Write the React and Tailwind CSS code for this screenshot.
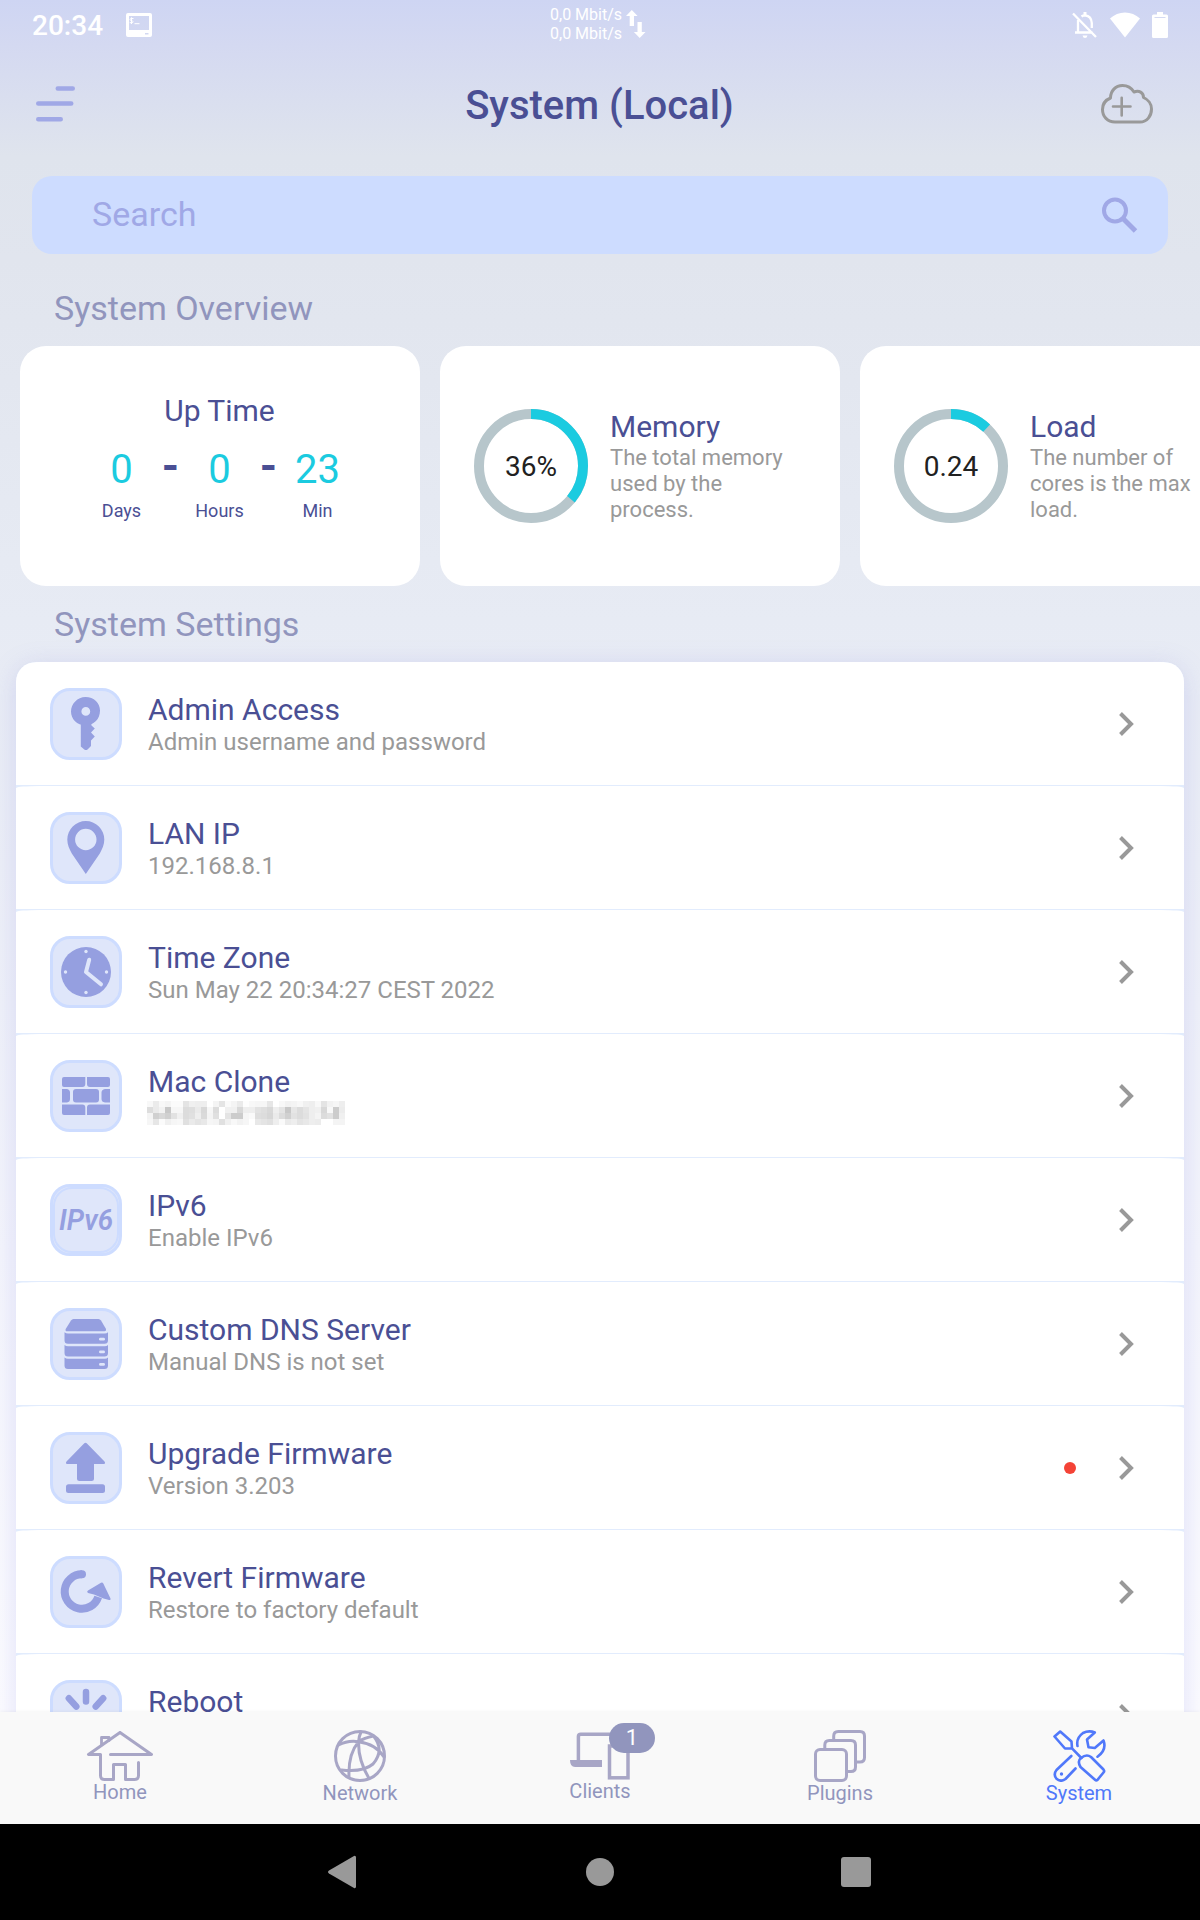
import React from "react";

const INK = "#959fe0";
const PALE = "#dfe6fa";

function StatusBar() {
  return (
    <div className="relative flex h-12 shrink-0 items-center justify-between px-8 pt-0.5 text-white">
      <div className="flex items-center gap-[23px]">
        <span className="pt-0.5 text-[28px] leading-[44px] font-medium">20:34</span>
        <svg width="26" height="24" viewBox="0 0 26 24">
          <path fillRule="evenodd" fill="#fff" d="M2 0H24q2 0 2 2V22q0 2-2 2H2q-2 0-2-2V2Q0 0 2 0ZM3 3V17H23V3ZM19 20v1.5h3.500V20Z" />
          <path d="M7.500 5.500H5.300Q4 5.500 4 6.500T5.300 7.500T7 8.600T5.500 9.700H3.700M5.500 4.300V11M8.500 10.700H13.500" stroke="#fff" strokeWidth="1" fill="none" />
        </svg>
      </div>
      <div className="absolute top-[5px] left-[550px] flex gap-1">
        <div className="text-base leading-[19px]">
          <div>0,0 Mbit/s</div>
          <div>0,0 Mbit/s</div>
        </div>
        <svg className="mt-[5px]" width="20" height="28" viewBox="0 0 20 28" fill="#fff">
          <path d="M5.800 0L11.600 6H8V16H3.700V6H0ZM13.700 28L19.500 22H15.800V12H11.500V22H7.900Z" />
        </svg>
      </div>
      <div className="flex items-center gap-3">
        <svg width="26" height="28" viewBox="0 0 26 28" fill="none" stroke="#fff" strokeWidth="2.300">
          <path d="M6 9V20.500M3 21.500H20.500M9.500 5.500Q11 4.300 13 4.300Q19.500 5 19.800 12V17M1 2.500L24 26" />
          <path d="M13 1v3" strokeWidth="3" />
          <path d="M10.500 24.500h5q-.6 2.600-2.500 2.600t-2.500-2.600Z" fill="#fff" stroke="none" />
        </svg>
        <svg width="30" height="26" viewBox="0 0 30 26">
          <path d="M0 6.500Q6.500.5 15 .5T30 6.500L15 25.500Z" fill="#fff" />
        </svg>
        <svg width="16" height="26" viewBox="0 0 16 26">
          <path d="M5 0H11V2.500H14.500Q16 2.500 16 4V24.500Q16 26 14.500 26H1.500Q0 26 0 24.500V4Q0 2.500 1.500 2.500H5Z" fill="#fff" />
          <path d="M2.500 5.500H13.500" stroke="#d4daf3" />
        </svg>
      </div>
    </div>
  );
}

function Header() {
  return (
    <header className="flex h-28 shrink-0 items-center justify-between pr-[47px] pl-9">
      <svg width="52" height="36" viewBox="0 0 52 36" stroke="#a0a8e6" strokeWidth="4.600" strokeLinecap="round">
        <path d="M21.800 2.500H36.700M2.300 17.500H35.200M2.300 33.200H24.700" />
      </svg>
      <h1 className="pt-[3px] pl-[10px] text-[40px] leading-[48px] font-medium text-[#4a4f94]">System (Local)</h1>
      <svg width="52" height="40" viewBox="0 0 52 40" fill="none" stroke="#999" strokeWidth="3" strokeLinejoin="round" strokeLinecap="round">
        <path d="M14 38H39C46 38 50.500 32 50.500 25C50.500 20 47 15.500 42.500 13.500C42.500 8.500 38 6 33 8C30.500 4 26.500 1.500 21.500 1.500C14.500 1.500 9.500 7 9.500 14C4.500 16 1.500 20 1.500 25.500C1.500 32.500 6.500 38 14 38Z" />
        <path d="M12 22.500H29.500M20.700 13.700V31.500" strokeWidth="2.600" />
      </svg>
    </header>
  );
}

function Ring({ value, label }) {
  const c = 2 * Math.PI * 52;
  return (
    <div className="relative flex size-[114px] shrink-0 items-center justify-center">
      <svg className="absolute inset-0 -rotate-90" width="114" height="114" viewBox="0 0 114 114" fill="none" strokeWidth="10">
        <circle cx="57" cy="57" r="52" stroke="#b7c6cb" />
        <circle cx="57" cy="57" r="52" stroke="#1bcbe0" strokeDasharray={`${c * value} ${c}`} />
      </svg>
      <span className="relative pt-0.5 text-[28px] leading-none text-[#212121]">{label}</span>
    </div>
  );
}

function GaugeCard({ value, label, title, text }) {
  return (
    <div className="flex h-60 w-[400px] shrink-0 items-center gap-[22px] rounded-[26px] bg-white pl-[34px]">
      <Ring value={value} label={label} />
      <div className="w-[180px] pt-px">
        <div className="text-[30px] leading-[34px] text-[#4a4f94]">{title}</div>
        <div className="pt-px text-[22px] leading-[26px] text-[#999]">{text}</div>
      </div>
    </div>
  );
}

function UpUnit({ n, unit }) {
  return (
    <div className="flex w-[60px] flex-col items-center">
      <span className="text-[40px] leading-[48px] text-[#1bcbe0]">{n}</span>
      <span className="mt-[5px] text-lg leading-6 text-[#4a4f94]">{unit}</span>
    </div>
  );
}

function Dash() {
  return <span className="w-[38px] text-center text-[44px] leading-[40px] font-bold text-[#4a4f94]">-</span>;
}

function UptimeCard() {
  return (
    <div className="flex h-60 w-[400px] shrink-0 flex-col items-center rounded-[26px] bg-white pt-[47px]">
      <div className="pr-px text-[30px] leading-9 text-[#4a4f94]">Up Time</div>
      <div className="mt-[17px] flex pr-px">
        <UpUnit n="0" unit="Days" />
        <Dash />
        <UpUnit n="0" unit="Hours" />
        <Dash />
        <UpUnit n="23" unit="Min" />
      </div>
    </div>
  );
}

const glyphs = {
  key: (
    <g fill={INK}>
      <path fillRule="evenodd" d="M35.500 9C44 9 50 15 50 22.500C50 31 44 37.300 35.500 37.300S21 31 21 23.500S27.500 9 35.500 9ZM35.800 19a4.400 4.400 0 1 0 0 8.800a4.400 4.400 0 1 0 0-8.800Z" />
      <path d="M30.800 35H41L41.500 37.500L44.800 40.500L41 44.500L44.800 48.500L41 52.500V58L37.500 61.500Q36 62.500 34.300 61.500L30.800 58.500Z" />
    </g>
  ),
  pin: (
    <path fill={INK} fillRule="evenodd" d="M17.300 27.500a18.500 18.500 0 0 1 37 0c0 5-2 9.500-4.500 14L35.800 62L21.800 41.500c-2.500-4.500-4.500-9-4.500-14ZM35.800 16.800a10.700 10.700 0 1 0 0 21.400a10.700 10.700 0 1 0 0-21.400Z" />
  ),
  clock: (
    <g>
      <circle cx="36" cy="36" r="25" fill={INK} />
      <g fill={PALE}>
        <circle cx="36" cy="15.500" r="1.700" /><circle cx="36" cy="56.500" r="1.700" />
        <circle cx="15.500" cy="36" r="1.700" /><circle cx="56.500" cy="36" r="1.700" />
      </g>
      <path d="M39.200 23.700L36 36L51 48.300" fill="none" stroke={PALE} strokeWidth="4" strokeLinecap="round" strokeLinejoin="round" />
    </g>
  ),
  wall: (
    <g fill={INK}>
      <path d="M14 17H35.300V24Q35.300 27 32.300 27H14Q12 27 12 25V19Q12 17 14 17ZM37 17H58Q60 17 60 19V25Q60 27 58 27H40Q37 27 37 24Z" />
      <path d="M12 29H17Q20 29.500 20 32.500V39Q20 42 17 42.500H12ZM60 29H55Q51.500 29.500 51.500 32.500V39Q51.500 42 55 42.500H60Z" />
      <rect x="23" y="29" width="26" height="13.500" rx="3" />
      <path d="M14 55H35.300V47.500Q35.300 44.500 32.300 44.500H12V53Q12 55 14 55ZM37 55H58Q60 55 60 53V44.500H40Q37 44.500 37 47.500Z" />
    </g>
  ),
  ipv6: (
    <g>
      <rect x="4" y="4" width="64" height="64" rx="18" fill="none" stroke="#cddcff" strokeWidth="2" />
      <text x="36" y="46" textAnchor="middle" fill={INK} fontSize="28.500" fontStyle="italic" fontWeight="600" textLength="54" lengthAdjust="spacingAndGlyphs">IPv6</text>
    </g>
  ),
  server: (
    <g fill={INK}>
      <path d="M23.500 11H48.500Q50 11 51 12.500L56 21Q56.500 23.300 54.500 23.300H17Q15 23.300 15.700 21L21 12.500Q22 11 23.500 11Z" />
      {[24.3, 37, 49.500].map((y) => (
        <g key={y}>
          <path d={`M14.500 ${y}Q16 ${y + 1.200} 18 ${y + 1.200}H54.500Q57 ${y + 1.200} 58 ${y}V${y + 8}Q58 ${y + 11.500} 54.500 ${y + 11.500}H18Q14.500 ${y + 11.500} 14.500 ${y + 8}Z`} />
          <rect x="49" y={y + 5.500} width="6" height="2.800" rx="1.400" fill={PALE} />
        </g>
      ))}
    </g>
  ),
  upload: (
    <g fill={INK}>
      <path d="M34.300 11.300Q35.500 10.200 36.700 11.300L54.500 29.500Q56 32 53.500 32H44V46.500Q44 49 41.500 49H29.500Q27 49 27 46.500V32H17.500Q15 32 16.500 29.500Z" />
      <rect x="16" y="52.200" width="39" height="8.700" rx="2.500" />
    </g>
  ),
  revert: (
    <g>
      <path d="M32 18.300A17.200 17.200 0 1 0 48.200 41" fill="none" stroke={INK} strokeWidth="8" />
      <circle cx="32" cy="18.200" r="4" fill={INK} />
      <path d="M38 34.500L51 26.800Q52.500 26 53.300 27.500L60.500 42.500Q61 44.500 59 44L53.500 42.500L44 38.500L38 37Q36.200 35.800 38 34.500Z" fill={INK} />
    </g>
  ),
  reboot: (
    <path d="M36 12V21.500M18.800 18.300L26.300 26.500M53.200 18.300L45.700 26.500M12 38H20M52 38H60M36 52V60" stroke={INK} strokeWidth="6.500" strokeLinecap="round" />
  ),
};

const mosaic = [
  "f8ebf8f4fbfbe4f0eeeefff4e4faf4eafdf8f6f6e6fff8f2f4f8f0eef8e4f2f6ee",
  "ddeaf2c8f6f6dcdeead8f6dcfff0f0d8eeeee2ded8eee4c8e6dce4eef0d8f8ccec",
  "f4d0d8d0e2f0dce0eedaf4e0ffe4ccccf6fadedcd6eadcd0e2dce2eef4dce2ccf0",
  "f6e6fbf0f6f8e0eae4e8f6f4e0f0f8f2f6ffe8e4e0eefaeaeee4e8eeecfffff4f4",
];

function Mosaic() {
  return (
    <svg className="mt-[2px] mb-[4px] -ml-px block" width="198" height="24" viewBox="0 0 198 24" shapeRendering="crispEdges">
      {mosaic.map((row, y) =>
        row.match(/../g).map((v, x) => <rect key={x + "-" + y} x={x * 6} y={y * 6} width="6" height="6" fill={`#${v}${v}${v}`} />)
      )}
    </svg>
  );
}

const rows = [
  { icon: "key", title: "Admin Access", sub: "Admin username and password" },
  { icon: "pin", title: "LAN IP", sub: "192.168.8.1" },
  { icon: "clock", title: "Time Zone", sub: "Sun May 22 20:34:27 CEST 2022" },
  { icon: "wall", title: "Mac Clone", masked: true },
  { icon: "ipv6", title: "IPv6", sub: "Enable IPv6" },
  { icon: "server", title: "Custom DNS Server", sub: "Manual DNS is not set" },
  { icon: "upload", title: "Upgrade Firmware", sub: "Version 3.203", dot: true },
  { icon: "revert", title: "Revert Firmware", sub: "Restore to factory default" },
  { icon: "reboot", title: "Reboot" },
];

function Row({ icon, title, sub, masked, dot }) {
  return (
    <div className="bg-[#e2ecfd] pb-px">
      <div className="flex h-[123px] items-center rounded-t-[24px_2px] bg-white pr-[50px] pl-[34px]">
        <div className="mt-px flex size-[72px] shrink-0 items-center justify-center rounded-[20px] border-[3px] border-[#cddcff] bg-[#dfe6fa]">
          <svg className="shrink-0" width="72" height="72" viewBox="0 0 72 72">{glyphs[icon]}</svg>
        </div>
        <div className="ml-[26px] flex-1 pt-[3px]">
          <div className="text-[30px] leading-[34px] text-[#4a4f94]">{title}</div>
          {masked ? <Mosaic /> : <div className="h-[30px] text-2xl leading-[30px] text-[#999]">{sub}</div>}
        </div>
        {dot && <span className="mt-px mr-[42px] size-3 rounded-full bg-[#f44336]" />}
        <svg className="mt-px" width="16" height="26" viewBox="0 0 16 26">
          <path d="M2.500 2.500L13 13L2.500 23.500" fill="none" stroke="#999" strokeWidth="4" />
        </svg>
      </div>
    </div>
  );
}

function NavItem({ label, active, labelClass, children }) {
  return (
    <div className={"flex w-60 flex-col items-center pt-[18px] " + (active ? "pr-0.5 text-[#5078fa]" : "text-[#9195bd]")}>
      <div className={"flex h-[52px] items-center " + (active ? "text-[#5078fa]" : "text-[#a8a6c6]")}>{children}</div>
      <span className={"text-xl leading-6 " + labelClass}>{label}</span>
    </div>
  );
}

const line = { fill: "none", stroke: "currentColor", strokeWidth: 3, strokeLinecap: "round", strokeLinejoin: "round" };

function BottomNav() {
  return (
    <nav className="relative flex h-28 shrink-0 bg-[#f9f9f9] shadow-[0_-1px_3px_rgba(0,0,0,0.04)]">
      <NavItem label="Home" labelClass="-mt-0.5">
        <svg width="68" height="52" viewBox="0 1 68 52" {...line}>
          <path d="M34 3.500L2.500 25.500H14.500V46.500q0 4 4 4h9V35.500h12v15h9q4 0 4-4V33.500M34 3.500L65.500 25.500H24.500" />
          <path d="M15.500 16V8.500h7.500v3" strokeWidth="2.800" />
        </svg>
      </NavItem>
      <NavItem label="Network" labelClass="-mt-px">
        <svg width="52" height="52" viewBox="0 0 52 52" {...line}>
          <circle cx="26" cy="26" r="24.500" />
          <path d="M27 2Q25 6 24.600 11.700Q24 30 34.800 48M4.500 15Q14 10 24.600 11.700Q42 14 50 27M24.600 11.700Q30 8 39.500 6M24.600 11.700Q14 24 15 47M39.500 6Q51 20 39 34Q29 42.500 7.500 40" />
        </svg>
      </NavItem>
      <NavItem label="Clients" labelClass="-mt-[3px]">
        <div className="relative h-[52px] w-[60px]">
          <svg width="60" height="52" viewBox="0 0 60 52" fill="none" stroke="currentColor" strokeWidth="3.500">
            <path d="M8.400 31V6.500Q8.400 4.200 10.700 4.200H40" />
            <path d="M0 30H32V37H5Q0 37 0 30Z" fill="currentColor" stroke="none" />
            <rect x="39.500" y="16" width="18.500" height="31.800" />
          </svg>
          <span className="absolute -top-[7px] left-[39px] flex h-[30px] w-[46px] items-center justify-center rounded-full bg-[#9195bd] text-[22px] leading-none text-white">1</span>
        </div>
      </NavItem>
      <NavItem label="Plugins" labelClass="-mt-px">
        <svg width="52" height="52" viewBox="0 0 52 52" {...line}>
          <rect x="1.500" y="19.500" width="31" height="31" rx="4.500" />
          <path d="M10.800 19V15q0-4.500 4.500-4.500H37q4.500 0 4.500 4.500V37q0 4.500-4.500 4.500h-4M19.700 10V6q0-4.500 4.500-4.500H46q4.500 0 4.500 4.500V27.500q0 4.500-4.500 4.500h-4" />
        </svg>
      </NavItem>
      <NavItem label="System" active labelClass="-mt-px">
        <svg width="53" height="52" viewBox="0 0 53 52" {...line} strokeWidth={2.600}>
          <path d="M1.500 6.500L7.200 1.500L18.500 11.500L19 18.300L12 18.500ZM19 18.300L28.400 28" />
          <path d="M27.500 37Q24 31 28 28Q33.500 23.500 38 27L50.500 39.500Q51.800 41 50.500 42.500L44.500 49.800Q43.300 51 42 49.800Z" />
          <path d="M18.300 26L3.500 40Q0 44.500 3.500 48.800Q8 52.500 12.500 49L22.500 38.500" />
          <circle cx="8.500" cy="44" r="1.700" fill="currentColor" stroke="none" />
          <path d="M24.500 16Q23 8 30 3Q36 0 41.800 2.500L34 9.500L35.500 17.300L41.800 18L50.500 10.500Q54 20 44.500 26.700" />
        </svg>
      </NavItem>
    </nav>
  );
}

function SystemKeys() {
  return (
    <div className="flex h-24 shrink-0 items-center justify-center bg-black">
      <svg className="mr-[229px] -ml-0.5" width="30" height="34" viewBox="0 0 30 34">
        <path d="M2 15.500L27 1Q29 0.300 29 2.500V31.500Q29 33.700 27 33L2 18.500Q0 17 2 15.500Z" fill="#999" />
      </svg>
      <span className="size-7 rounded-full bg-[#999]" />
      <span className="ml-[227px] size-[30px] rounded-[3px] bg-[#999]" />
    </div>
  );
}

export default function App() {
  return (
    <div className="flex h-[1920px] w-[1200px] flex-col overflow-hidden bg-[linear-gradient(to_bottom,#ced5f3_0px,#d4d9f1_45px,#dfe4ed_156px,#e1e5ee_260px,#e7ebf4_620px,#f4f5fc_1250px,#fcfcff_1712px)] font-[Roboto,sans-serif]">
      <div className="flex min-h-0 flex-1 flex-col overflow-hidden">
        <StatusBar />
        <Header />
        <div className="mx-8 mt-4 flex h-[78px] shrink-0 items-center justify-between rounded-[20px] bg-[#cddcff] pr-[30px] pl-[60px]">
          <span className="pb-[3px] text-[34px] leading-[40px] text-[#a0a8e6]">Search</span>
          <svg width="37" height="36" viewBox="0 0 37 36" fill="none" stroke="#a0a8e6">
            <circle cx="14" cy="13.500" r="11" strokeWidth="4" />
            <path d="M22.500 22L34.500 34" strokeWidth="5" />
          </svg>
        </div>
        <h2 className="shrink-0 pt-4 pl-[54px] text-[34px] leading-[76px] text-[#9195bd]">System Overview</h2>
        <div className="flex shrink-0 gap-5 overflow-hidden pl-5">
          <UptimeCard />
          <GaugeCard value={0.36} label="36%" title="Memory" text="The total memory used by the process." />
          <GaugeCard value={0.12} label="0.24" title="Load" text="The number of cores is the max load." />
        </div>
        <h2 className="shrink-0 pl-[54px] text-[34px] leading-[76px] text-[#9195bd]">System Settings</h2>
        <div className="mx-4 shrink-0 rounded-[20px] shadow-[0_4px_24px_rgba(140,140,225,0.26)]">
          <div className="overflow-hidden rounded-[20px]">
            {rows.map((r) => (
              <Row key={r.title} {...r} />
            ))}
          </div>
        </div>
      </div>
      <BottomNav />
      <SystemKeys />
    </div>
  );
}
